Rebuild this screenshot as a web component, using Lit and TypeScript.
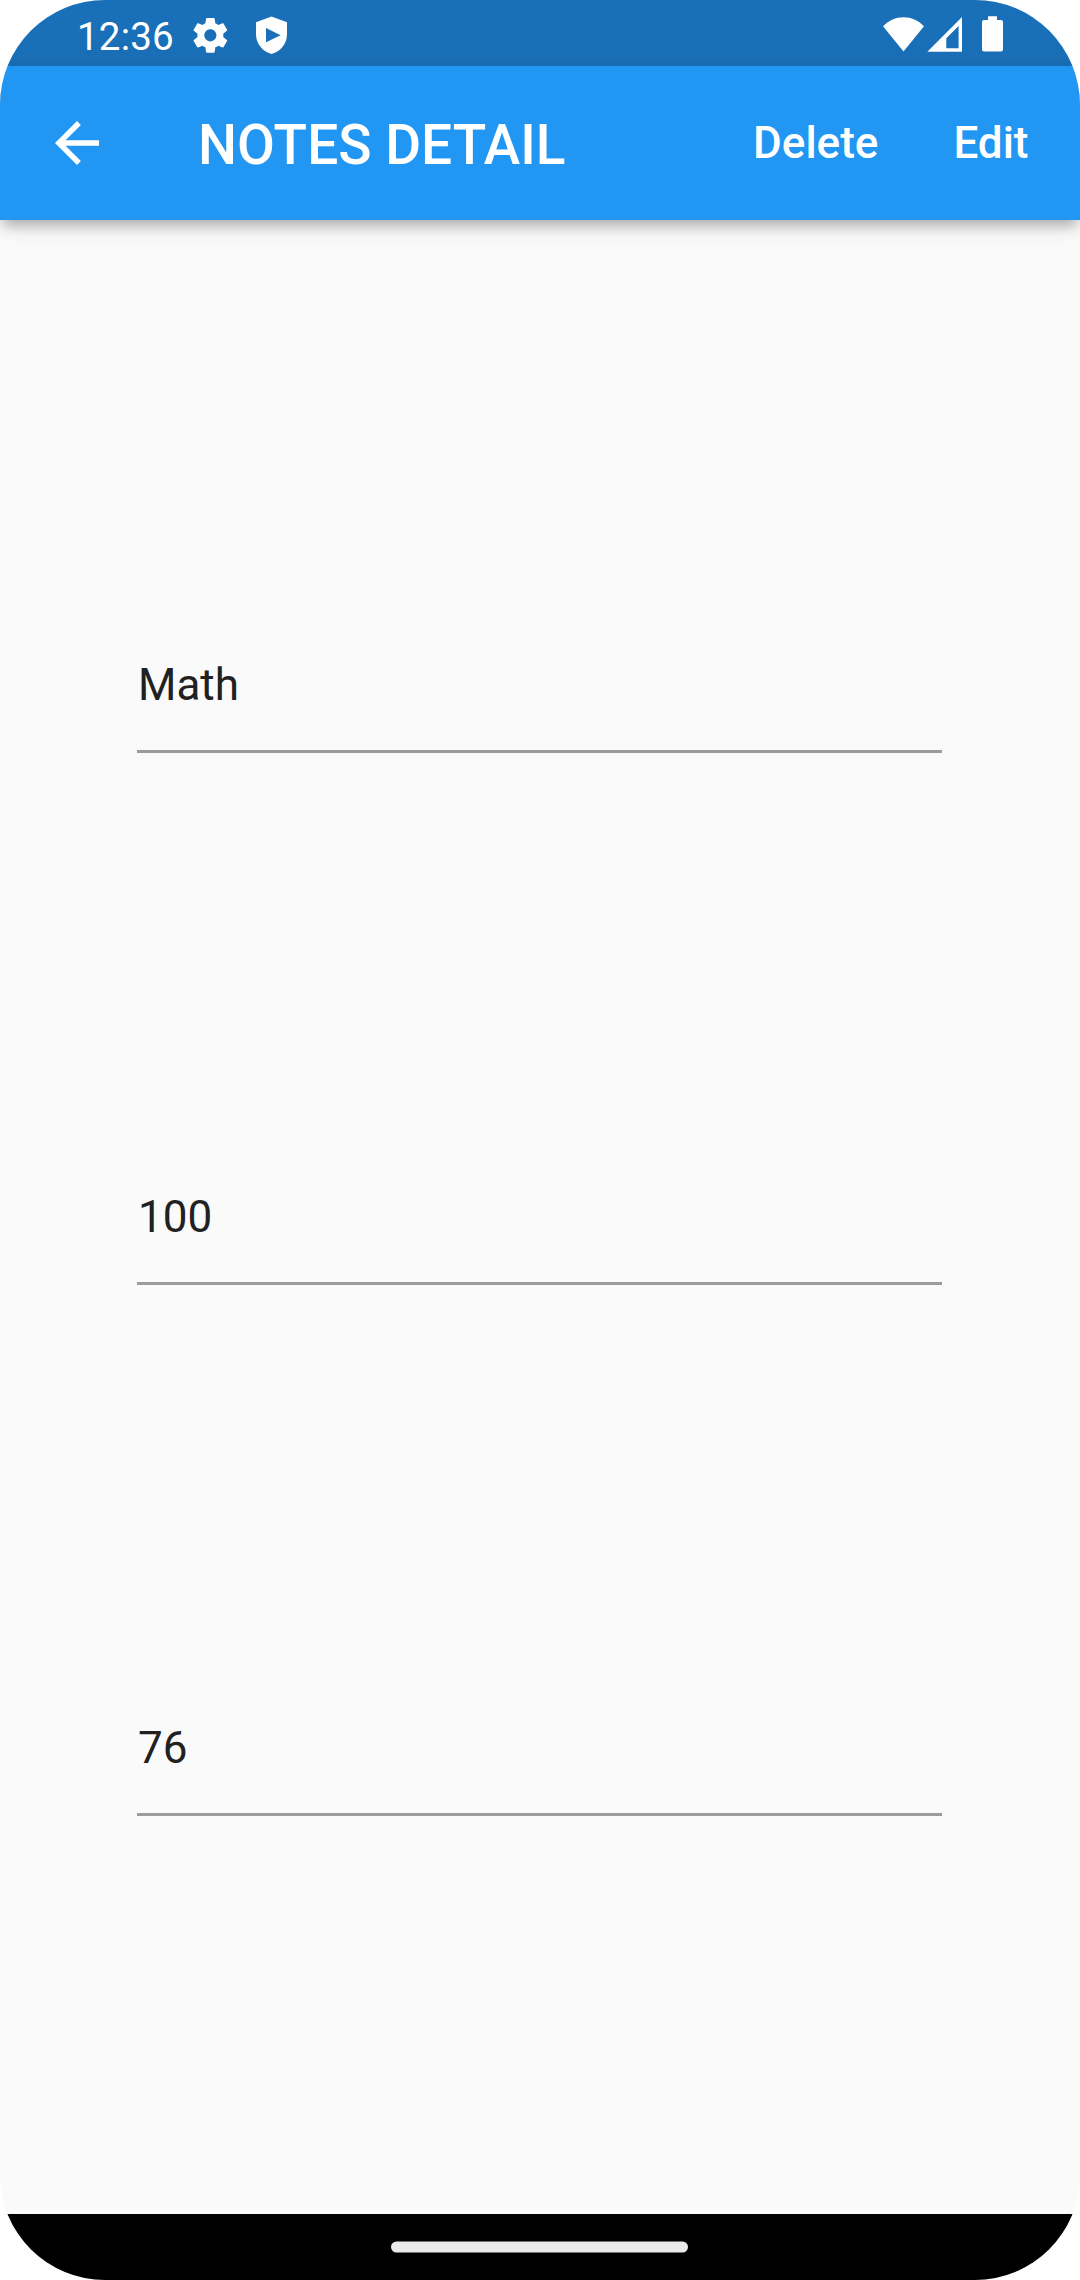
import { LitElement, html, css } from "lit";
import { customElement, property } from "lit/decorators.js";

@customElement("status-bar")
class StatusBar extends LitElement {
  static styles = css`
    :host {
      display: flex;
      justify-content: space-between;
      height: 66px;
      background: #1a70b8;
      color: #fff;
    }
    .side {
      display: flex;
    }
    .clock {
      margin-left: 77px;
      width: 97px;
      font-size: 38.5px;
      letter-spacing: 0.2px;
      line-height: 45px;
      padding-top: 14px;
      white-space: nowrap;
    }
    svg {
      display: block;
      fill: #fff;
    }
    .notifications {
      width: 126px;
      height: 66px;
    }
    .system {
      width: 200px;
      height: 66px;
    }
  `;

  render() {
    return html`
      <div class="side">
        <div class="clock">12:36</div>
        <svg class="notifications" viewBox="174 0 126 66">
          <g transform="translate(189.6 14.6) scale(1.73)">
            <path
              d="M19.43 12.98c.04-.32.07-.64.07-.98s-.03-.66-.07-.98l2.11-1.65c.19-.15.24-.42.12-.64l-2-3.46c-.12-.22-.39-.3-.61-.22l-2.49 1c-.52-.4-1.08-.73-1.69-.98l-.38-2.65C14.46 2.18 14.25 2 14 2h-4c-.25 0-.46.18-.49.42l-.38 2.65c-.61.25-1.17.59-1.69.98l-2.49-1c-.23-.09-.49 0-.61.22l-2 3.46c-.13.22-.07.49.12.64l2.11 1.65c-.04.32-.07.65-.07.98s.03.66.07.98l-2.11 1.65c-.19.15-.24.42-.12.64l2 3.46c.12.22.39.3.61.22l2.49-1c.52.4 1.08.73 1.69.98l.38 2.65c.03.24.24.42.49.42h4c.25 0 .46-.18.49-.42l.38-2.65c.61-.25 1.17-.59 1.69-.98l2.49 1c.23.09.49 0 .61-.22l2-3.46c.12-.22.07-.49-.12-.64l-2.11-1.65zM12 15.5c-1.93 0-3.5-1.57-3.5-3.5s1.57-3.5 3.5-3.5 3.5 1.57 3.5 3.5-1.57 3.5-3.5 3.5z"
            />
          </g>
          <path
            fill-rule="evenodd"
            d="M271.5 16.5L287 22.3V34.5C287 43.5 280.5 51.6 271.5 54C262.5 51.6 256 43.5 256 34.5V22.3ZM266 28V42.3L280.6 35.2Z"
          />
        </svg>
      </div>
      <svg class="system" viewBox="880 0 200 66">
        <path d="M903.5 51.6L883 26.2C889 20.3 895.8 17.2 903.5 17.2S918 20.3 924 26.2Z" />
        <path fill-rule="evenodd" d="M962 17V51.7H927.3ZM958.6 26L946.3 38.2V48.3H958.6Z" />
        <path
          d="M988 16.3H997V20H1001Q1003 20 1003 22V49.6Q1003 51.6 1001 51.6H984Q982 51.6 982 49.6V22Q982 20 984 20H988Z"
        />
      </svg>
    `;
  }
}

@customElement("app-bar")
class AppBar extends LitElement {
  @property() heading = "";

  static styles = css`
    :host {
      display: flex;
      align-items: center;
      height: 154px;
      background: #2196f3;
      color: #fff;
      font-weight: 500;
      box-shadow:
        0 5.5px 11px -2.75px rgba(0, 0, 0, 0.16),
        0 11px 13.75px -2.75px rgba(0, 0, 0, 0.14),
        0 2.75px 27.5px 0 rgba(0, 0, 0, 0.1);
    }
    .back {
      width: 66px;
      height: 66px;
      margin: 0 88px 0 44px;
      fill: #fff;
    }
    .title {
      flex: 1;
      font-size: 55px;
      line-height: 64px;
      padding-top: 3px;
      white-space: nowrap;
    }
    .action {
      font-size: 44px;
      line-height: 52px;
      white-space: nowrap;
    }
    .edit {
      margin: 0 51.5px 0 75px;
    }
  `;

  render() {
    return html`
      <svg class="back" viewBox="0 0 24 24">
        <path d="M20 11H7.83l5.59-5.59L12 4l-8 8 8 8 1.41-1.41L7.83 13H20v-2z" />
      </svg>
      <div class="title">${this.heading}</div>
      <div class="action">Delete</div>
      <div class="action edit">Edit</div>
    `;
  }
}

@customElement("note-field")
class NoteField extends LitElement {
  @property() value = "";

  static styles = css`
    :host {
      display: flex;
      flex-direction: column;
      justify-content: space-between;
      box-sizing: border-box;
      height: 132px;
      color: #212121;
      font-size: 44px;
    }
    .text {
      line-height: 52px;
      padding: 39.6px 0 0 1px;
    }
    .line {
      height: 3px;
      margin-bottom: -1.5px;
      background: #9b9b9b;
    }
  `;

  render() {
    return html`
      <div class="text">${this.value}</div>
      <div class="line"></div>
    `;
  }
}

@customElement("app-root")
class AppRoot extends LitElement {
  static styles = css`
    :host {
      display: block;
      background: #fff;
      font-family: Roboto, sans-serif;
    }
    .screen {
      display: flex;
      flex-direction: column;
      width: 1080px;
      height: 2280px;
      overflow: hidden;
      border-radius: 105px;
      background: #fafafa;
    }
    .fields {
      flex: 1;
      display: flex;
      flex-direction: column;
      justify-content: space-evenly;
      padding: 0 138px 0 137px;
    }
    .navigation {
      display: flex;
      justify-content: center;
      height: 66px;
      background: #000;
    }
    .handle {
      width: 298px;
      height: 12px;
      margin-top: 27px;
      fill: #ebebeb;
    }
  `;

  private values = ["Math", "100", "76"];

  render() {
    return html`
      <div class="screen">
        <status-bar></status-bar>
        <app-bar heading="NOTES DETAIL"></app-bar>
        <div class="fields">
          ${this.values.map((value) => html`<note-field .value=${value}></note-field>`)}
        </div>
        <div class="navigation">
          <svg class="handle" viewBox="0 0 298 12">
            <rect x="0" y="0.5" width="297" height="11" rx="5.5" />
          </svg>
        </div>
      </div>
    `;
  }
}
